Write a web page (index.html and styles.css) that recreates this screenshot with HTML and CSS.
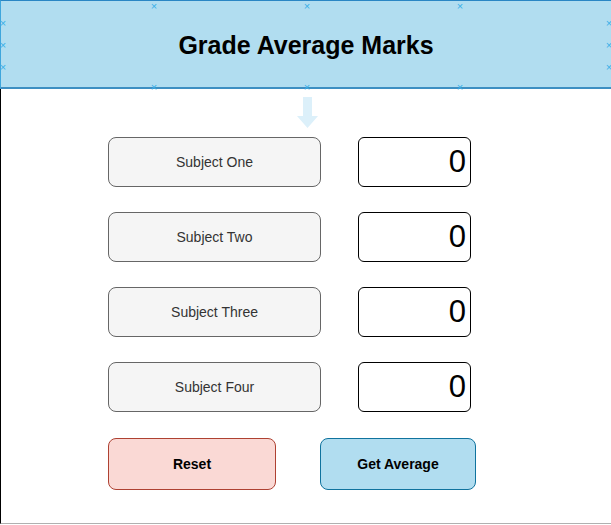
FILE: index.html
```html
<!DOCTYPE html>
<html>
<head>
<meta charset="utf-8">
<link rel="stylesheet" href="styles.css">
</head>
<body>
<div class="page">
  <header class="header">
    <h1 class="title">Grade Average Marks</h1>
    <span class="mark mt1">×</span><span class="mark mt2">×</span><span class="mark mt3">×</span>
    <span class="mark mb1">×</span><span class="mark mb2">×</span><span class="mark mb3">×</span>
    <span class="mark ml1">×</span><span class="mark ml2">×</span><span class="mark ml3">×</span>
    <span class="mark mr1">×</span><span class="mark mr2">×</span><span class="mark mr3">×</span>
  </header>
  <main class="canvas">
    <svg class="arrow" width="24" height="32" viewBox="0 0 24 32"><path d="M7 0 H16 V19 H22 L11.5 31 L1 19 H7 Z" fill="#dcf0fa"/></svg>
    <div class="grid">
      <div class="label">Subject One</div><div class="value">0</div>
      <div class="label">Subject Two</div><div class="value">0</div>
      <div class="label">Subject Three</div><div class="value">0</div>
      <div class="label">Subject Four</div><div class="value">0</div>
    </div>
    <div class="actions">
      <div class="btn reset">Reset</div>
      <div class="btn avg">Get Average</div>
    </div>
  </main>
</div>
</body>
</html>
```
FILE: styles.css
```css
* { box-sizing: border-box; }
html, body { margin: 0; padding: 0; background: #fff; }
body { font-family: "Liberation Sans", Arial, sans-serif; }
.page { width: 611px; height: 525px; position: relative; overflow: hidden; }
.header {
  position: relative;
  height: 89px;
  background: #b1ddf0;
  border-top: 1px solid #2a86c4;
  border-bottom: 2px solid #3d8fc2;
  border-left: 1px solid #3fa6dc;
  display: flex;
  align-items: center;
  justify-content: center;
}
.title { margin: 0; font-size: 25px; font-weight: bold; color: #000; padding-top: 2px; }
.mark {
  position: absolute;
  color: #3ab0e8;
  font-size: 11px;
  line-height: 8px;
  width: 8px;
  height: 8px;
  text-align: center;
}
.mt1, .mt2, .mt3 { top: 1px; }
.mb1, .mb2, .mb3 { bottom: -4px; }
.mt1, .mb1 { left: 149px; }
.mt2, .mb2 { left: 302px; }
.mt3, .mb3 { left: 455px; }
.ml1, .ml2, .ml3 { left: -2px; }
.mr1, .mr2, .mr3 { right: -2px; }
.ml1, .mr1 { top: 18px; }
.ml2, .mr2 { top: 40px; }
.ml3, .mr3 { top: 62px; }
.canvas {
  position: relative;
  height: 435px;
  border-left: 1px solid #000;
  border-bottom: 1px solid #b0b0b0;
  padding: 48px 0 0 107px;
}
.arrow { position: absolute; left: 295px; top: 8px; }
.grid {
  display: grid;
  grid-template-columns: 213px 113px;
  column-gap: 37px;
  row-gap: 25px;
  grid-auto-rows: 50px;
}
.label {
  background: #f5f5f5;
  border: 1px solid #666;
  border-radius: 8px;
  color: #333;
  font-size: 14px;
  display: flex;
  align-items: center;
  justify-content: center;
}
.value {
  border: 1px solid #000;
  border-radius: 6px;
  font-size: 31px;
  color: #000;
  display: flex;
  align-items: center;
  justify-content: flex-end;
  padding-right: 4px;
}
.actions { display: flex; gap: 44px; margin-top: 26px; }
.btn {
  height: 52px;
  border-radius: 8px;
  font-size: 14px;
  font-weight: bold;
  color: #000;
  display: flex;
  align-items: center;
  justify-content: center;
}
.reset { width: 168px; background: #fad9d5; border: 1px solid #ae4132; }
.avg { width: 156px; background: #b1ddf0; border: 1px solid #10739e; }
```
